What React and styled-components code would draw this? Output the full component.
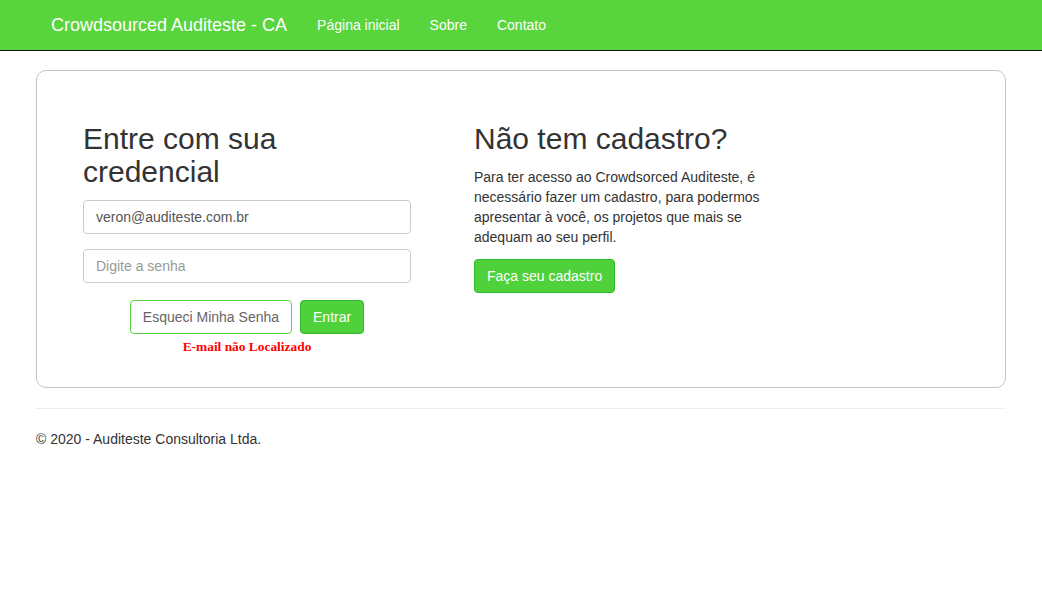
import styled, { createGlobalStyle } from 'styled-components'

const GlobalStyle = createGlobalStyle`
  html, body {
    margin: 0;
    padding: 0;
    background: #fff;
    font-family: "Liberation Sans", Arial, Helvetica, sans-serif;
    font-size: 14px;
    line-height: 20px;
    color: #333;
  }
  * { box-sizing: border-box; }
`

const Navbar = styled.nav`
  height: 51px;
  background-color: #58d43d;
  border-bottom: 1px solid #111;
`
const NavInner = styled.div`
  width: 970px;
  margin: 0 auto;
  height: 50px;
  display: flex;
  align-items: center;
  padding-top: 1px;
`
const Brand = styled.a`
  font-size: 18px;
  color: #fff;
  padding: 0 15px;
  line-height: 49px;
  text-decoration: none;
`
const NavLink = styled.a`
  font-size: 14px;
  color: #fff;
  padding: 0 15px;
  line-height: 49px;
  text-decoration: none;
`
const Container = styled.div`
  width: 970px;
  margin: 0 auto;
`
const Card = styled.div`
  margin-top: 19px;
  border: 1px solid #c4c4c4;
  border-radius: 10px;
  padding: 51px 0 0 46px;
  height: 318px;
  display: flex;
  gap: 63px;
`
const LeftCol = styled.div`
  width: 328px;
  display: flex;
  flex-direction: column;
`
const RightCol = styled.div`
  width: 300px;
  display: flex;
  flex-direction: column;
  align-items: flex-start;
`
const Title = styled.h2`
  margin: 0;
  font-size: 30px;
  font-weight: 500;
  line-height: 33px;
  color: #333;
`
const Input = styled.input`
  width: 100%;
  height: 34px;
  padding: 6px 12px;
  font-family: inherit;
  font-size: 14px;
  color: #555;
  border: 1px solid #ccc;
  border-radius: 4px;
  margin-top: ${p => p.$mt}px;
  outline: none;
  &::placeholder { color: #999; }
`
const ButtonRow = styled.div`
  margin-top: 17px;
  display: flex;
  justify-content: center;
  gap: 8px;
`
const Button = styled.button`
  height: 34px;
  padding: 6px 12px;
  font-family: inherit;
  font-size: 14px;
  line-height: 20px;
  border-radius: 4px;
  cursor: pointer;
  color: ${p => (p.$outline ? '#666' : '#fff')};
  background-color: ${p => (p.$outline ? '#fff' : '#4fd13b')};
  border: 1px solid ${p => (p.$outline ? '#5cd640' : '#2dbb2d')};
`
const ErrorText = styled.div`
  margin-top: 5px;
  text-align: center;
  font-family: "Liberation Serif", "Times New Roman", serif;
  font-weight: bold;
  font-size: 13.4px;
  line-height: 15px;
  color: #f00;
`
const Text = styled.p`
  margin: 12px 0 12px;
  font-size: 14px;
  line-height: 20px;
`
const Hr = styled.hr`
  margin: 20px 0 20px;
  border: 0;
  border-top: 1px solid #eee;
`
const Footer = styled.footer`
  font-size: 14px;
  line-height: 20px;
`

export default function App() {
  return (
    <>
      <GlobalStyle />
      <Navbar>
        <NavInner>
          <Brand>Crowdsourced Auditeste - CA</Brand>
          <NavLink>Página inicial</NavLink>
          <NavLink>Sobre</NavLink>
          <NavLink>Contato</NavLink>
        </NavInner>
      </Navbar>
      <Container>
        <Card>
          <LeftCol>
            <Title>Entre com sua<br />credencial</Title>
            <Input $mt={12} defaultValue="veron@auditeste.com.br" />
            <Input $mt={15} type="password" placeholder="Digite a senha" />
            <ButtonRow>
              <Button $outline>Esqueci Minha Senha</Button>
              <Button>Entrar</Button>
            </ButtonRow>
            <ErrorText>E-mail não Localizado</ErrorText>
          </LeftCol>
          <RightCol>
            <Title>Não tem cadastro?</Title>
            <Text>
              Para ter acesso ao Crowdsorced Auditeste, é necessário fazer um cadastro, para podermos
              apresentar à você, os projetos que mais se adequam ao seu perfil.
            </Text>
            <Button>Faça seu cadastro</Button>
          </RightCol>
        </Card>
        <Hr />
        <Footer>© 2020 - Auditeste Consultoria Ltda.</Footer>
      </Container>
    </>
  )
}
